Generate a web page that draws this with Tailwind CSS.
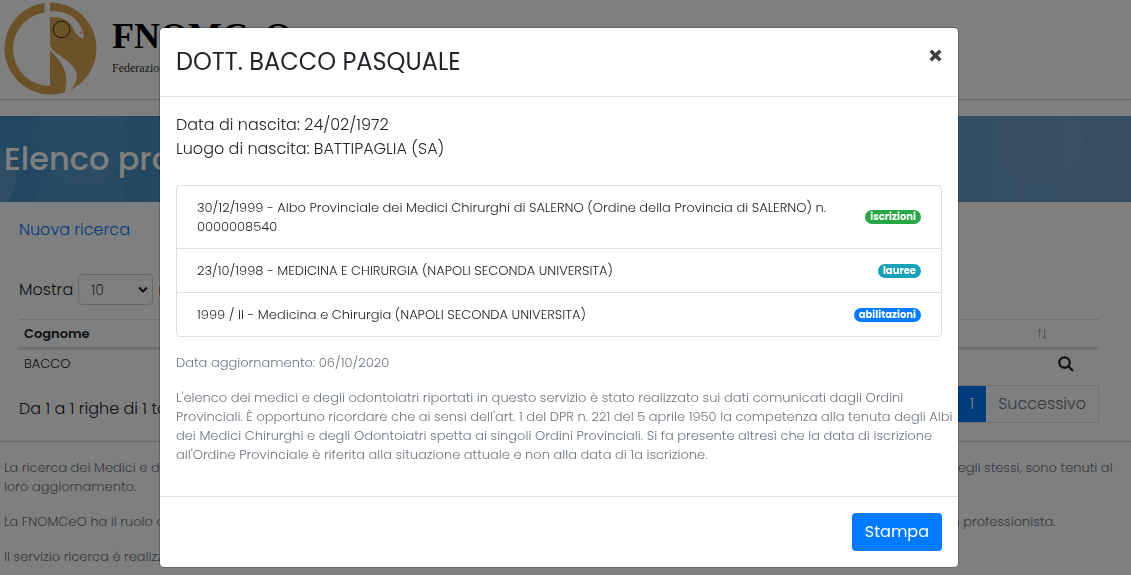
<!DOCTYPE html>
<html lang="it">
<head>
  <meta charset="utf-8">
  <meta name="viewport" content="width=device-width, initial-scale=1.0">
  <title>FNOMCeO - Elenco professionisti</title>
  <script src="https://cdn.jsdelivr.net/npm/@tailwindcss/browser@4"></script>
</head>
<body class="h-screen overflow-hidden bg-white font-[Poppins,Inter,sans-serif] text-base font-light text-[#212529]">

  <!-- Page -->
  <header class="flex h-[100px] items-start gap-3 border-b border-gray-300 pl-1 pt-[2px]">
    <svg class="h-24 w-24 shrink-0" viewBox="0 0 96 96" aria-label="FNOMCeO">
      <circle cx="46.500" cy="46.500" r="46" fill="#d9a450"/>
      <path d="M46 10 A37 37 0 0 0 46 84 Z" fill="#fff"/>
      <path d="M40.500 0H46V12H40.500Z" fill="#fff"/>
      <path d="M46 9.500C58 8 70 13 75 22C78 27 80 31 79 37C75 34 72 33 70 28C67 19 59 14 46 15.500Z" fill="#fff"/>
      <circle cx="76.500" cy="30.500" r="1" fill="#c18a3c"/>
      <path d="M46 43C48 50 56 53 62 58C76 68 76 78 65 90C63 92 60 92 61 88C66 72 58 60 46 48Z" fill="#fff"/>
      <circle cx="57.500" cy="27.500" r="8.300" fill="none" stroke="#3a2c18" stroke-width="1"/>
    </svg>
    <div class="pt-3 font-[Liberation_Serif,serif] font-normal">
      <div class="text-4xl leading-[44px] font-bold text-black">FNOMCeO</div>
      <div class="text-xs leading-5 text-[#333]">Federazione Nazionale degli Ordini dei Medici</div>
    </div>
  </header>

  <section class="relative mt-4 flex h-[86px] items-center overflow-hidden bg-linear-to-r from-[#458fc2] to-[#709dc3] pl-1">
    <svg class="absolute inset-0 h-full w-full" aria-hidden="true">
      <circle cx="-18" cy="62" r="34" fill="#fff" fill-opacity=".12"/>
      <circle cx="80" cy="20" r="48" fill="#fff" fill-opacity=".04"/>
      <circle cx="80" cy="88" r="45" fill="#fff" fill-opacity=".04"/>
      <circle cx="1041" cy="24" r="43" fill="#fff" fill-opacity=".03"/>
    </svg>
    <h1 class="relative text-[32px] font-medium text-white">Elenco professionisti</h1>
  </section>

  <main class="pl-[19px] pr-8">
    <a href="#" class="mt-4 block leading-6 text-[#007bff]">Nuova ricerca</a>
    <div class="mt-8 flex items-center gap-[5px]">
      <label for="righe">Mostra</label>
      <div class="relative">
        <select id="righe" class="h-[31px] w-[75px] appearance-none rounded border border-[#ced4da] bg-white px-3 text-sm text-[#495057]">
          <option>10</option>
          <option>25</option>
        </select>
        <svg class="pointer-events-none absolute right-[5px] top-3 h-2 w-[10px]" viewBox="0 0 10 8" fill="none" stroke="#222" stroke-width="2"><path d="M1 1.500L5 5.500L9 1.500"/></svg>
      </div>
      <span>righe</span>
    </div>

    <table class="mt-[14px] w-full text-[13px] leading-[19px]">
      <thead>
        <tr class="border-y border-b-[3px] border-[#dee2e6]">
          <th class="px-[5px] py-1 text-left font-semibold">Cognome</th>
          <th class="px-[5px] py-1 text-left font-semibold">Nome</th>
          <th class="w-[66px] py-1">
            <svg class="ml-1 h-3 w-[10px]" viewBox="0 0 10 12" fill="none" stroke="#b4b6b8"><path d="M2.500 11V1M.5 3.500L2.500 1L4.500 3.500M7.500 1V11M5.500 8.500L7.500 11L9.500 8.500"/></svg>
          </th>
        </tr>
      </thead>
      <tbody>
        <tr>
          <td class="px-[5px] py-1">BACCO</td>
          <td class="px-[5px] py-1">PASQUALE</td>
          <td class="py-1">
            <button class="ml-[25px] block" aria-label="Dettagli">
              <svg class="h-4 w-4" viewBox="0 0 16 16" fill="none" stroke="#212529" stroke-width="2.300"><circle cx="6.500" cy="6.500" r="5.200"/><path d="M10.300 10.300L15 15"/></svg>
            </button>
          </td>
        </tr>
      </tbody>
    </table>

    <div class="mt-2 flex items-center justify-between">
      <p class="pt-[10px]">Da 1 a 1 righe di 1 totali</p>
      <nav class="flex h-[38px] overflow-hidden rounded border border-[#dee2e6] leading-9">
        <a href="#" class="px-3 text-[#6c757d]">Precedente</a>
        <a href="#" class="bg-[#007bff] px-3 text-white">1</a>
        <a href="#" class="px-3 text-[#6c757d]">Successivo</a>
      </nav>
    </div>
  </main>

  <footer class="mt-[18px] space-y-4 border-t border-gray-300 pl-1 pr-4 pt-4 text-[13px] leading-[19px] text-[#6c757d]">
    <p>La ricerca dei Medici e degli Odontoiatri si fonda sui dati comunicati dagli Ordini Provinciali che, in base alla normativa vigente nonché su richiesta degli stessi, sono tenuti al loro aggiornamento.</p>
    <p>La FNOMCeO ha il ruolo di rendere disponibili tali dati e non risponde della loro eventuale incompletezza o di possibili errori nella scheda relativa a un professionista.</p>
    <p>Il servizio ricerca è realizzato dalla FNOMCeO.</p>
  </footer>

  <!-- Modal -->
  <div class="fixed inset-0 flex items-start justify-center bg-black/50 pt-[27px]">
    <div role="dialog" aria-modal="true" aria-labelledby="titolo" class="mr-[13px] w-full max-w-[800px] rounded-[5px] border border-black/20 bg-white bg-clip-padding">
      <div class="flex items-start justify-between border-b border-[#dee2e6] p-4">
        <h2 id="titolo" class="text-2xl leading-9 font-normal">DOTT. BACCO PASQUALE</h2>
        <button class="mt-[5px] block" aria-label="Chiudi">
          <svg class="h-[13px] w-[13px]" viewBox="0 0 13 13" fill="none" stroke="#404040" stroke-width="3.600"><path d="M1.700 1.700L11.300 11.300M11.300 1.700L1.700 11.300"/></svg>
        </button>
      </div>
      <div class="p-4 text-[13px] leading-[19px]">
        <p class="text-base leading-6">Data di nascita: 24/02/1972<br>Luogo di nascita: BATTIPAGLIA (SA)</p>
        <ul class="mt-6 divide-y divide-[#dfdfdf] rounded border border-[#dfdfdf]">
          <li class="flex items-center justify-between gap-8 px-5 py-3">
            <span>30/12/1999 - Albo Provinciale dei Medici Chirurghi di SALERNO (Ordine della Provincia di SALERNO) n. 0000008540</span>
            <span class="rounded-full bg-[#28a745] px-[5px] text-[10px] leading-[14px] font-bold text-white">iscrizioni</span>
          </li>
          <li class="flex items-center justify-between gap-8 px-5 py-3">
            <span>23/10/1998 - MEDICINA E CHIRURGIA (NAPOLI SECONDA UNIVERSITA)</span>
            <span class="rounded-full bg-[#17a2b8] px-[5px] text-[10px] leading-[14px] font-bold text-white">lauree</span>
          </li>
          <li class="flex items-center justify-between gap-8 px-5 py-3">
            <span>1999 / II - Medicina e Chirurgia (NAPOLI SECONDA UNIVERSITA)</span>
            <span class="rounded-full bg-[#007bff] px-[5px] text-[10px] leading-[14px] font-bold text-white">abilitazioni</span>
          </li>
        </ul>
        <p class="mt-4 text-[#6c757d]">Data aggiornamento: 06/10/2020</p>
        <p class="my-4 -mr-3 text-[#6c757d]">L'elenco dei medici e degli odontoiatri riportati in questo servizio è stato realizzato sui dati comunicati dagli Ordini Provinciali. È opportuno ricordare che ai sensi dell'art. 1 del DPR n. 221 del 5 aprile 1950 la competenza alla tenuta degli Albi dei Medici Chirurghi e degli Odontoiatri spetta ai singoli Ordini Provinciali. Si fa presente altresì che la data di iscrizione all'Ordine Provinciale è riferita alla situazione attuale e non alla data di 1a iscrizione.</p>
      </div>
      <div class="flex justify-end border-t border-[#dee2e6] p-4">
        <button class="h-[38px] rounded bg-[#007bff] px-[13px] font-normal text-white">Stampa</button>
      </div>
    </div>
  </div>
</body>
</html>
